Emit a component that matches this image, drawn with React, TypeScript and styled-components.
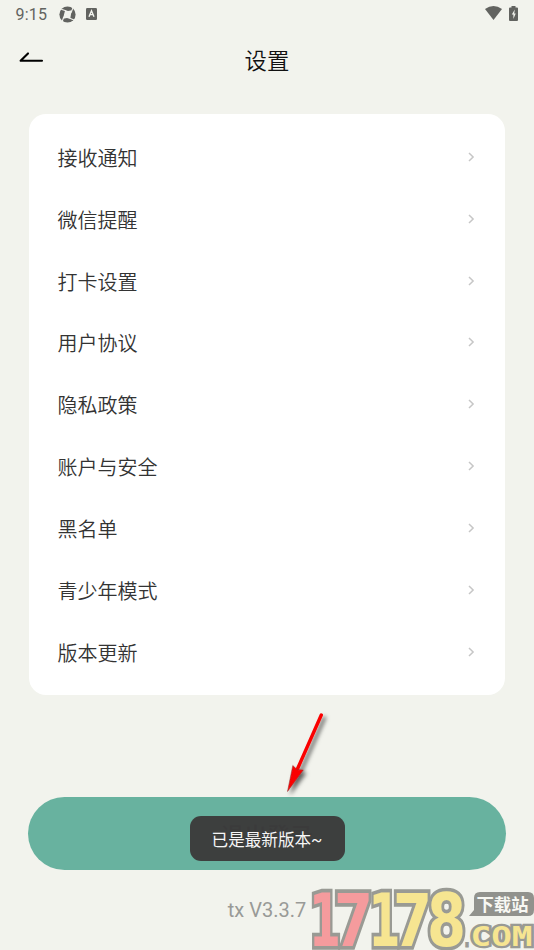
import React from 'react';
import styled, { createGlobalStyle } from 'styled-components';

const GlobalStyle = createGlobalStyle`
  * { box-sizing: border-box; }
  body { margin: 0; background: #f2f3ed; }
`;

const Screen = styled.main`
  position: relative;
  display: flex;
  flex-direction: column;
  width: 534px;
  height: 950px;
  overflow: hidden;
  background: #f2f3ed;
  color: #333;
  font-family: Roboto, 'Noto Sans CJK SC', sans-serif;
`;

const StatusBar = styled.div`
  display: flex;
  align-items: center;
  flex: none;
  height: 28px;
  padding: 0 15px 0 15.5px;
  color: #626360;
  font-size: 16px;
  letter-spacing: 0.25px;
`;

const StatusIcons = styled.div`
  display: flex;
  align-items: center;
  gap: 10px;
  margin-left: 12px;
  height: 26px;
`;

const SystemIcons = styled(StatusIcons)`
  gap: 7px;
  margin: -2px 1px 0 auto;
`;

const Header = styled.header`
  display: grid;
  grid-template-columns: 48px 1fr 48px;
  align-items: center;
  flex: none;
  height: 64px;
`;

const BackButton = styled.button`
  display: flex;
  padding: 0 0 0 18px;
  margin-top: -5px;
  border: 0;
  background: none;
`;

const Title = styled.h1`
  margin: 0;
  padding-top: 2px;
  color: #111;
  font-size: 22.4px;
  line-height: 32px;
  font-weight: 350;
  text-align: center;
`;

const Card = styled.section`
  flex: none;
  height: 581px;
  margin: 22px 28.6px 0 28.6px;
  padding-top: 12px;
  border-radius: 17px;
  background: #fff;
`;

const Row = styled.div`
  display: flex;
  align-items: center;
  justify-content: space-between;
  height: 61.85px;
  padding: 0 29px 0 28.8px;
  font-size: 20px;
  font-weight: 350;
  line-height: 30px;
`;

const RowLabel = styled.span`
  padding-top: 4px;
`;

const LogoutButton = styled.button`
  display: flex;
  align-items: center;
  justify-content: center;
  flex: none;
  height: 73px;
  margin: 102px 28.5px 0 28.3px;
  border: 0;
  border-radius: 36.5px;
  background: #68b29f;
  color: #16211e;
  font: 500 23px Roboto, 'Noto Sans CJK SC', sans-serif;
`;

const Toast = styled.div`
  position: absolute;
  left: 189.5px;
  top: 816.3px;
  display: flex;
  align-items: center;
  justify-content: center;
  width: 155px;
  height: 44.7px;
  border-radius: 11px;
  background: rgba(60, 60, 60, 0.98);
  color: #f6f6f6;
  font-size: 16.6px;
  padding-top: 1px;
  white-space: nowrap;
`;

const Version = styled.p`
  margin: 27px 0 0;
  color: #999a97;
  font-size: 20px;
  line-height: 26px;
  text-align: center;
`;

const Pointer = styled.svg`
  position: absolute;
  left: 275px;
  top: 700px;
`;

const Watermark = styled.svg`
  position: absolute;
  left: 304px;
  top: 880px;
`;

const items = ['接收通知', '微信提醒', '打卡设置', '用户协议', '隐私政策', '账户与安全', '黑名单', '青少年模式', '版本更新'];

const digits = [
  { char: '1', x: 309, stretch: 0.9, color: '#f59b9d' },
  { char: '7', x: 334, stretch: 1.1, color: '#f59b9d' },
  { char: '1', x: 368.4, stretch: 0.9, color: '#f6e591' },
  { char: '7', x: 393, stretch: 1.1, color: '#f6e591' },
  { char: '8', x: 427, stretch: 1.1, color: '#f6e591' },
];

export default function App() {
  return (
    <>
      <GlobalStyle />
      <Screen>
        <StatusBar>
          <span>9:15</span>
          <StatusIcons>
            <svg width="17" height="17" viewBox="0 0 17 17">
              <circle cx="8.5" cy="8.5" r="8.1" fill="#626360" />
              <path d="M6.2 4.1 9 5.1 12.9 4.3 12 8.2 11.2 12.9 8 11.9 4.1 12.8 5 8.5Z" fill="#f2f3ed" />
              <path d="M6.8 4.8 2.2 3.2M12.2 6.6 14 1.6M10.8 12.2 15 14M4.8 10.8 3.2 15.5" stroke="#f2f3ed" strokeWidth="1.1" />
            </svg>
            <svg width="11" height="12" viewBox="0 0 11 12">
              <rect width="11" height="12" rx="1.2" fill="#626360" />
              <path d="m3 8.7 2.5-6 2.5 6M4 6.6h3" fill="none" stroke="#f2f3ed" strokeWidth="1.4" />
            </svg>
          </StatusIcons>
          <SystemIcons>
            <svg width="17" height="14" viewBox="0 0 17 14">
              <path d="M0 3Q8.5-3 17 3L8.5 14Z" fill="#626360" />
            </svg>
            <svg width="9" height="15" viewBox="0 0 9 15">
              <path d="M2.5 0h4v1.6H8q1 0 1 1V14q0 1-1 1H1q-1 0-1-1V2.6q0-1 1-1h1.5Z" fill="#626360" />
              <path d="M5.8 3.6 2.8 8.4h1.6V13l2.3-5.4H5.2Z" fill="#f2f3ed" />
            </svg>
          </SystemIcons>
        </StatusBar>
        <Header>
          <BackButton aria-label="返回">
            <svg width="26" height="14" viewBox="0 0 26 14">
              <path d="M10 2.4 2.6 9.8H24" fill="none" stroke="#000" strokeWidth="2.1" strokeLinecap="round" strokeLinejoin="round" />
            </svg>
          </BackButton>
          <Title>设置</Title>
        </Header>
        <Card>
          {items.map((item) => (
            <Row key={item}>
              <RowLabel>{item}</RowLabel>
              <svg width="9" height="12" viewBox="0 0 9 12">
                <path d="m2 2 4.1 4L2 10" fill="none" stroke="#c6c6c6" strokeWidth="1.5" />
              </svg>
            </Row>
          ))}
        </Card>
        <LogoutButton>退出登录</LogoutButton>
        <Version>tx V3.3.7</Version>
        <Toast>已是最新版本~</Toast>
        <Pointer width="70" height="100" viewBox="275 700 70 100">
          <defs>
            <filter id="shade" x="-50%" y="-20%" width="220%" height="150%">
              <feDropShadow dx="3" dy="3" stdDeviation="2" floodColor="#000" floodOpacity=".6" />
            </filter>
          </defs>
          <g filter="url(#shade)">
            <path d="M321.3 715 297 770" stroke="#fa0606" strokeWidth="3.4" strokeLinecap="round" />
            <path d="M287.5 791.5 292.8 765.5 297 769.5 303.3 770Z" fill="#fa0606" stroke="#8e3030" strokeWidth=".5" />
          </g>
        </Pointer>
        <Watermark width="230" height="70" viewBox="304 880 230 70">
          <g fontFamily="DejaVu Sans" fontWeight="700" stroke="#999a94" strokeLinejoin="miter" paintOrder="stroke">
            {digits.map((d) => (
              <text key={d.x} transform={`translate(${d.x} 946) scale(${d.stretch} 1.42)`} fontSize="51" fill={d.color} strokeWidth="5.2">
                {d.char}
              </text>
            ))}
          </g>
          <path d="M480 892h48q6 0 6 6v12q0 6-6 6h-59l5-6v-12q0-6 6-6Z" fill="#91928d" />
          <text x="476.5" y="911" fontFamily="Noto Sans CJK SC" fontWeight="700" fontSize="17.3" textLength="52" fill="#f8f8f3">下载站</text>
          <g fontFamily="DejaVu Sans Mono" fontWeight="700" fontSize="26" fill="#f6e591" stroke="#999a94" strokeWidth="4.5" paintOrder="stroke">
            <text x="462" y="947" fontSize="24" fill="#999a94" strokeWidth="1" textLength="10" lengthAdjust="spacingAndGlyphs">.</text>
            <text x="470.5" y="946" textLength="62" lengthAdjust="spacingAndGlyphs">COM</text>
          </g>
        </Watermark>
      </Screen>
    </>
  );
}
